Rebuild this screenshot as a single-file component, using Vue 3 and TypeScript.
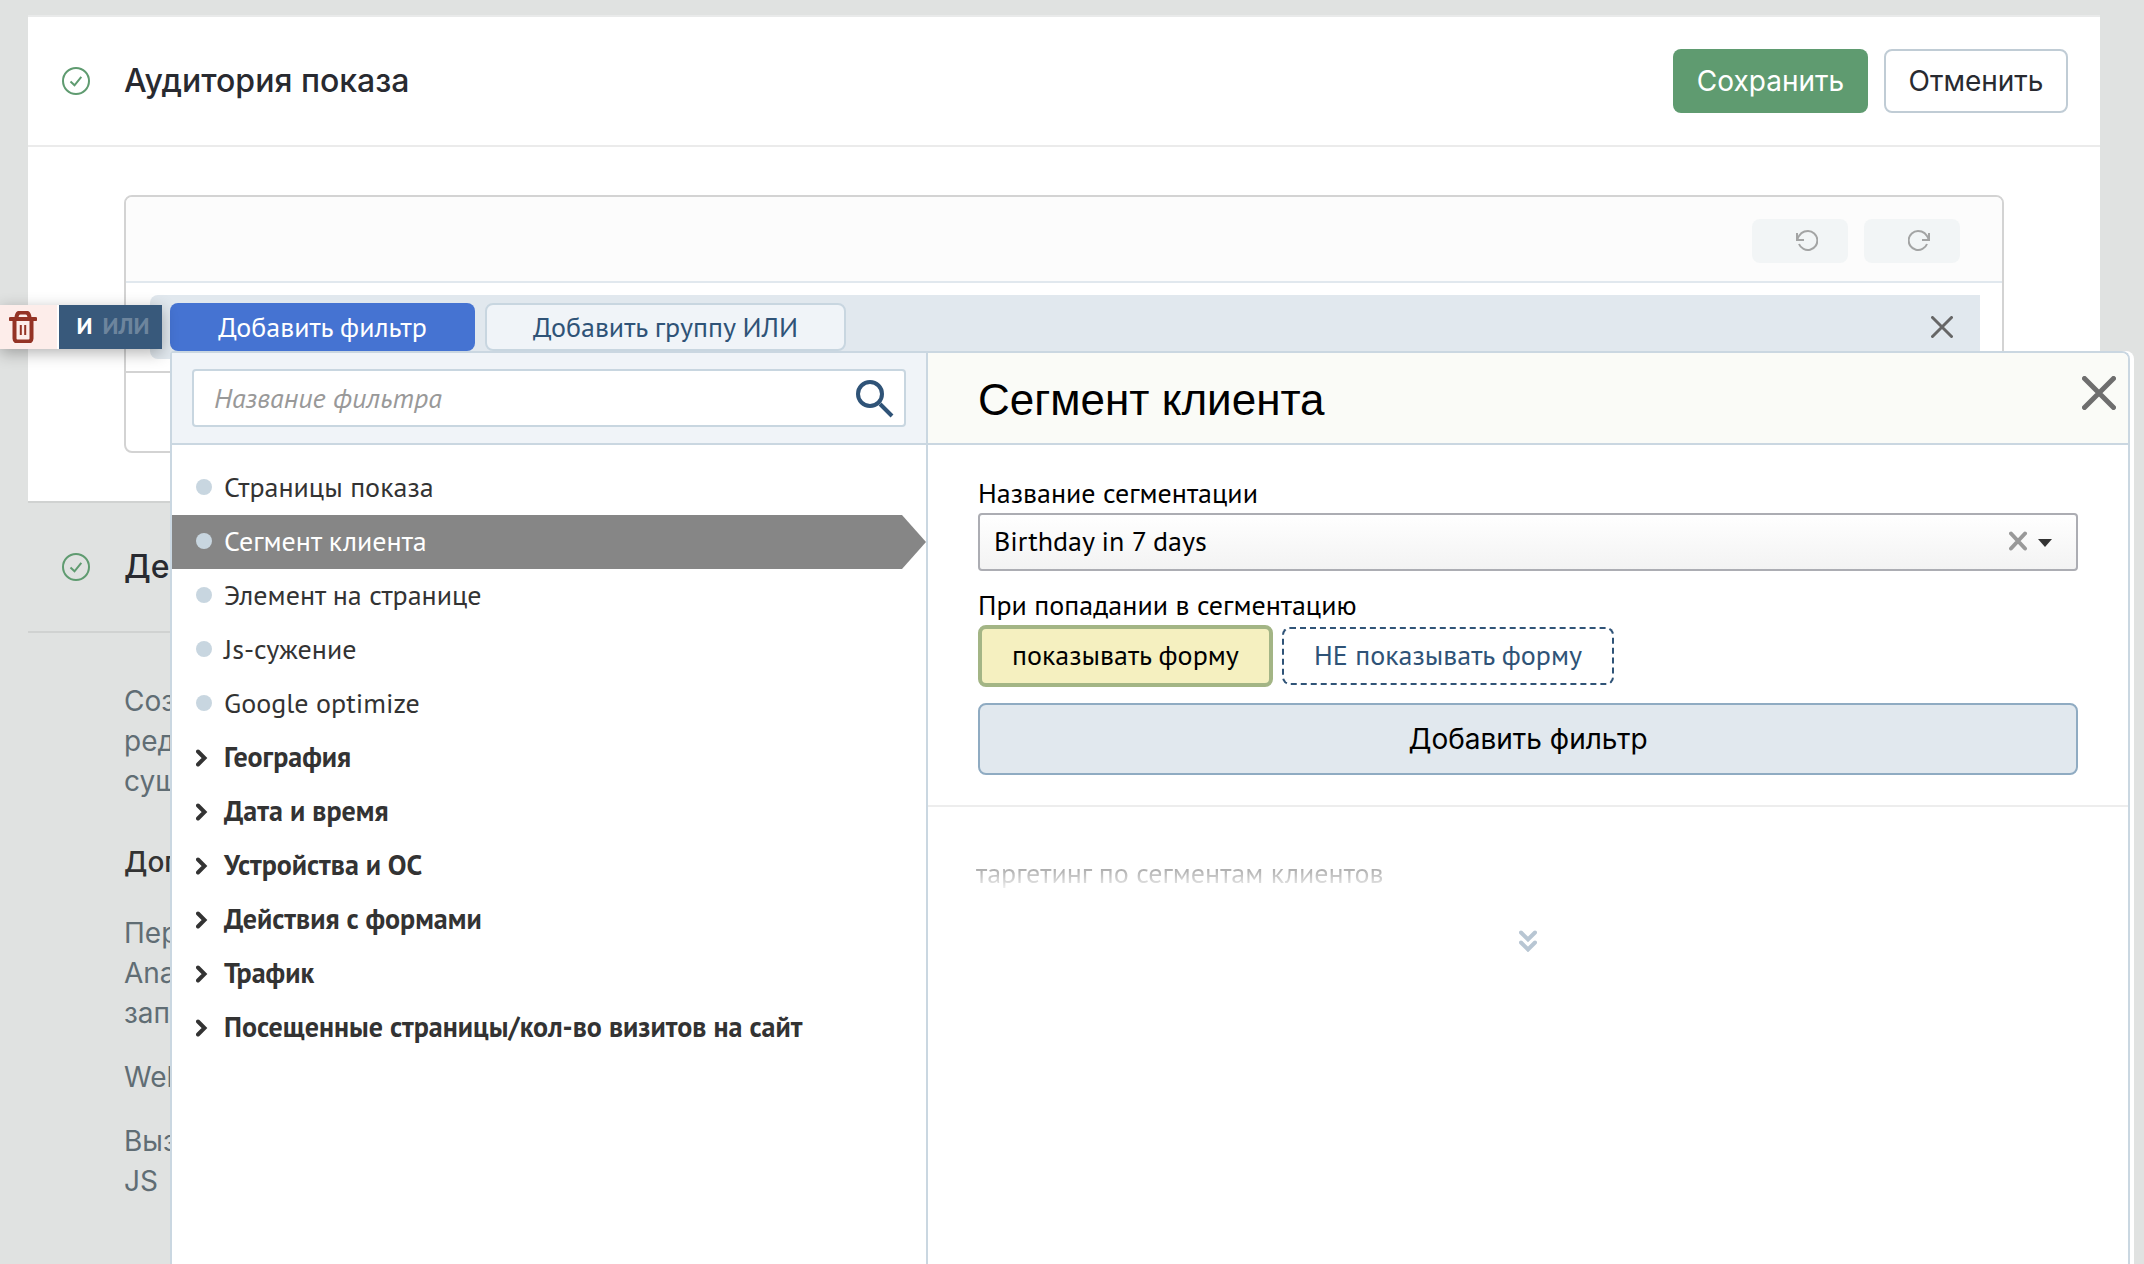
<script setup lang="ts">
import { ref } from 'vue'

interface FilterItem {
  name: string
  group: boolean
}

const filters: FilterItem[] = [
  { name: 'Страницы показа', group: false },
  { name: 'Сегмент клиента', group: false },
  { name: 'Элемент на странице', group: false },
  { name: 'Js-сужение', group: false },
  { name: 'Google optimize', group: false },
  { name: 'География', group: true },
  { name: 'Дата и время', group: true },
  { name: 'Устройства и ОС', group: true },
  { name: 'Действия с формами', group: true },
  { name: 'Трафик', group: true },
  { name: 'Посещенные страницы/кол-во визитов на сайт', group: true },
]

const selected = ref('Сегмент клиента')
const query = ref('')
const segment = ref('Birthday in 7 days')
const show = ref(true)

const intro: string[] = ['Соз', 'ред', 'сущ']
const extras: string[][] = [['Пер', 'Ana', 'зап'], ['Web'], ['Выз', 'JS']]
</script>

<template>
  <main class="page">
    <section class="card">
      <header class="card-head">
        <svg class="check" viewBox="0 0 28 28"><circle cx="14" cy="14" r="13" /><path d="M8.5 14.5 12.5 18.3 19.3 9.8" /></svg>
        <h2>Аудитория показа</h2>
        <button class="btn save" type="button">Сохранить</button>
        <button class="btn cancel" type="button">Отменить</button>
      </header>
      <div class="card-body">
        <div class="editor">
          <div class="toolbar">
            <button class="history" type="button" aria-label="Отменить действие">
              <svg viewBox="0 0 22 22"><path d="M1 3v7h7M1.2 9.8C3 4.500 7 1 12 1a9.500 9.500 0 1 1-9 13" /></svg>
            </button>
            <button class="history" type="button" aria-label="Повторить действие">
              <svg viewBox="0 0 22 22"><path d="M21 3v7h-7M20.800 9.800C19 4.500 15 1 10 1a9.500 9.500 0 1 0 9 13" /></svg>
            </button>
          </div>
          <div class="row">
            <div class="band">
              <div class="logic">
                <button class="trash" type="button" aria-label="Удалить">
                  <svg viewBox="0 0 28 32">
                    <path d="M1.500 8h25M7.500 7.500C7.500 3 9 1.500 11.500 1.500h5c2.500 0 4 1.500 4 6" />
                    <path d="M5.500 8v19.500q0 3 3 3h11q3 0 3-3V8" />
                    <path class="thin" d="M11.800 14v10M16.200 14v10" />
                  </svg>
                </button>
                <button class="switch" type="button"><b>И</b><b class="off">ИЛИ</b></button>
              </div>
              <button class="add primary" type="button">Добавить фильтр</button>
              <button class="add group" type="button">Добавить группу ИЛИ</button>
              <button class="icon band-close" type="button" aria-label="Закрыть группу">
                <svg viewBox="0 0 22 22"><path d="M1.500 1.500l19 19M20.500 1.500l-19 19" /></svg>
              </button>

              <div class="popup">
                <div class="panel">
                  <div class="side">
                    <div class="side-head">
                      <label class="search">
                        <input v-model="query" type="text" placeholder="Название фильтра" aria-label="Название фильтра" />
                        <svg viewBox="0 0 38 38"><circle cx="14" cy="14" r="12" /><path d="M24 24 36 36" /></svg>
                      </label>
                    </div>
                    <ul class="filters">
                      <li v-for="f in filters" :key="f.name">
                        <button
                          type="button"
                          class="filter"
                          :class="{ bold: f.group, active: f.name === selected }"
                          @click="selected = f.name"
                        >
                          <svg v-if="f.group" class="chevron" viewBox="0 0 16 18"><path d="M2 2.500 8.500 9 2 15.500" /></svg>
                          <span v-else class="dot"></span>
                          {{ f.name }}
                        </button>
                      </li>
                    </ul>
                  </div>
                  <div class="detail">
                    <div class="detail-head">
                      <h1>Сегмент клиента</h1>
                      <button class="icon panel-close" type="button" aria-label="Закрыть">
                        <svg viewBox="0 0 34 34"><path d="M2.500 2.500l29 29M31.500 2.500l-29 29" /></svg>
                      </button>
                    </div>
                    <form class="form" @submit.prevent>
                      <label for="segment">Название сегментации</label>
                      <div class="select">
                        <select id="segment" v-model="segment">
                          <option>Birthday in 7 days</option>
                        </select>
                        <svg class="marks" viewBox="0 0 44 22">
                          <path class="clear" d="M2 3.500 16 18.500M16 3.500 2 18.500" />
                          <path class="caret" d="M29 9h14l-7 8z" />
                        </svg>
                      </div>
                      <span class="caption">При попадании в сегментацию</span>
                      <div class="options">
                        <button type="button" class="option" :class="{ on: show }" @click="show = true">показывать форму</button>
                        <button type="button" class="option" :class="{ on: !show }" @click="show = false">НЕ показывать форму</button>
                      </div>
                      <button class="submit" type="submit">Добавить фильтр</button>
                    </form>
                    <div class="hint">
                      <p>таргетинг по сегментам клиентов</p>
                      <button class="icon more" type="button" aria-label="Развернуть">
                        <svg viewBox="0 0 18 22"><path d="M2 2.500l7 7 7-7M2 12.500l7 7 7-7" /></svg>
                      </button>
                    </div>
                  </div>
                </div>
              </div>
            </div>
          </div>
          <div class="foot"></div>
        </div>
      </div>
    </section>

    <section class="next">
      <header class="card-head">
        <svg class="check" viewBox="0 0 28 28"><circle cx="14" cy="14" r="13" /><path d="M8.500 14.500 12.500 18.300 19.300 9.800" /></svg>
        <h2>Дей</h2>
      </header>
      <div class="text">
        <p><span v-for="line in intro" :key="line">{{ line }}</span></p>
        <h3>Доп</h3>
        <p v-for="(lines, i) in extras" :key="i"><span v-for="line in lines" :key="line">{{ line }}</span></p>
      </div>
    </section>
  </main>
</template>

<style>
body {
  margin: 0;
}
</style>

<style scoped>
.page {
  position: relative;
  min-height: 100vh;
  box-sizing: border-box;
  padding: 15px 44px 0 28px;
  overflow: hidden;
  background: #e0e2e1;
  color: #282a30;
  font: 400 28px/40px Inter, sans-serif;
}
.page * {
  box-sizing: border-box;
}
h1,
h2,
h3,
p,
ul {
  margin: 0;
  padding: 0;
}
button,
input,
select {
  margin: 0;
  padding: 0;
  border: 0;
  background: none;
  color: inherit;
  font: inherit;
}
svg {
  display: block;
  flex: none;
  fill: none;
  stroke: currentColor;
  stroke-width: 2;
}
.card {
  border-top: 2px solid #e9eaea;
  border-bottom: 2px solid #d0d2d1;
  background: #fff;
}
.card-head {
  display: flex;
  align-items: center;
  height: 130px;
  padding: 0 32px 0 34px;
  border-bottom: 2px solid #ebebeb;
}
.check {
  width: 28px;
  height: 28px;
  color: #5f9b70;
}
h2 {
  flex: 1;
  margin-left: 34px;
  font-size: 32px;
  font-weight: 500;
}
.btn {
  height: 64px;
  border-radius: 8px;
}
.save {
  width: 195px;
  background: #5f9b70;
  color: #fff;
}
.cancel {
  width: 184px;
  margin-left: 16px;
  border: 2px solid #c0ccd5;
}
.card-body {
  padding: 48px 96px;
}
.editor {
  border: 2px solid #d3d3d3;
  border-radius: 8px;
}
.toolbar {
  display: flex;
  justify-content: flex-end;
  gap: 16px;
  height: 86px;
  padding: 22px 42px;
  border-bottom: 2px solid #e1e8ee;
  border-radius: 6px 6px 0 0;
  background: #fcfcfc;
}
.history {
  width: 96px;
  height: 44px;
  padding-left: 44px;
  border-radius: 8px;
  background: #f2f5f6;
  color: #a3a4a4;
}
.history svg {
  width: 22px;
  height: 22px;
}
.row {
  padding: 12px 22px 12px 24px;
  border-bottom: 2px solid #d3d3d3;
}
.foot {
  height: 78px;
}
.band {
  position: relative;
  display: flex;
  gap: 10px;
  height: 64px;
  padding: 8px 27px 8px 20px;
  border-radius: 8px 0 0 8px;
  background: #e1e8ee;
  font-family: "PT Sans", Lato, sans-serif;
}
.logic {
  position: absolute;
  top: 10px;
  left: -150px;
  display: flex;
  gap: 2px;
  width: 162px;
  height: 44px;
  background: #fff;
  box-shadow: 0 4px 16px rgba(0, 0, 0, 0.3);
}
.trash {
  width: 57px;
  padding-left: 9px;
  background: #fdedea;
  color: #943325;
}
.trash svg {
  width: 28px;
  height: 32px;
  stroke-width: 4;
  stroke-linecap: round;
}
.trash .thin {
  stroke-width: 2;
  stroke-linecap: butt;
}
.switch {
  display: flex;
  flex: 1;
  align-items: center;
  justify-content: center;
  gap: 10px;
  padding: 0 0 2px 5px;
  background: #38597b;
  color: #fff;
  font-size: 24px;
}
.off {
  color: #6d859d;
}
.add {
  height: 48px;
  border-radius: 8px;
}
.primary {
  width: 305px;
  background: #4573d2;
  color: #fff;
}
.group {
  width: 361px;
  border: 2px solid #c8d6e0;
  background: #f0f4f8;
  color: #2f5377;
}
.icon svg {
  stroke-linecap: round;
}
.band-close {
  margin-left: auto;
  color: #666;
}
.band-close svg {
  width: 22px;
  height: 22px;
  stroke-width: 3;
}
.popup {
  position: absolute;
  top: 56px;
  right: -154px;
  left: 20px;
  padding-right: 4px;
  border-radius: 8px 8px 0 0;
  background: #fff;
}
.panel {
  display: flex;
  min-height: calc(100vh - 351px);
  border: 2px solid #cad7e1;
  border-bottom: 0;
  border-radius: 4px 8px 0 0;
  color: #333;
}
.side {
  width: 756px;
  border-right: 2px solid #cad7e1;
}
.side-head {
  height: 92px;
  padding: 16px 20px;
  border-bottom: 2px solid #cad7e1;
  background: #f0f4f8;
}
.search {
  display: flex;
  align-items: center;
  height: 58px;
  padding: 0 10px 0 20px;
  border: 2px solid #c8d6e0;
  border-radius: 4px;
  background: #fff;
  color: #2f5377;
}
.search input {
  flex: 1;
  height: 54px;
  padding-bottom: 2px;
  outline: 0;
}
.search input::placeholder {
  color: #999;
  font-style: italic;
  opacity: 1;
}
.search svg {
  width: 38px;
  height: 38px;
  margin-top: 2px;
  stroke-width: 4;
}
.filters {
  padding-top: 16px;
  list-style: none;
}
.filter {
  display: flex;
  align-items: center;
  gap: 12px;
  width: 100%;
  height: 54px;
  padding: 0 0 2px 24px;
  text-align: left;
}
.bold {
  font-weight: 700;
}
.active {
  background: #868686;
  color: #fff;
  clip-path: polygon(0 0, calc(100% - 24px) 0, 100% 50%, calc(100% - 24px) 100%, 0 100%);
}
.dot {
  width: 16px;
  height: 16px;
  border-radius: 50%;
  background: #c8d6e0;
}
.chevron {
  width: 16px;
  height: 18px;
  margin-top: 2px;
  stroke-width: 4;
  stroke-linecap: round;
}
.detail {
  flex: 1;
  color: #000;
}
.detail-head {
  display: flex;
  align-items: center;
  justify-content: space-between;
  height: 92px;
  padding: 0 12px 0 50px;
  border-bottom: 2px solid #cad7e1;
  border-radius: 0 6px 0 0;
  background: #fafbf7;
}
h1 {
  padding-top: 4px;
  font: 400 44px/48px "Liberation Sans", Arial, sans-serif;
}
.panel-close {
  margin-bottom: 10px;
  color: #6e6e6e;
}
.panel-close svg {
  width: 34px;
  height: 34px;
  stroke-width: 5;
}
.form {
  display: flex;
  flex-direction: column;
  padding: 28px 50px 30px;
  border-bottom: 2px solid #ededed;
}
.select {
  position: relative;
  margin-bottom: 14px;
}
select {
  display: block;
  appearance: none;
  width: 100%;
  height: 58px;
  padding: 0 80px 2px 14px;
  border: 2px solid #acadb3;
  border-radius: 4px;
  background: linear-gradient(#fff, #f3f3f3);
}
.marks {
  position: absolute;
  top: 17px;
  right: 25px;
  width: 44px;
  height: 22px;
  pointer-events: none;
}
.clear {
  stroke: #999;
  stroke-width: 4;
  stroke-linecap: round;
}
.caret {
  fill: #333;
  stroke: none;
}
.options {
  display: flex;
  align-items: center;
  gap: 9px;
  margin-bottom: 16px;
}
.option {
  height: 58px;
  padding: 0 30px 2px;
  border: 2px dashed #2f5377;
  border-radius: 8px;
  color: #2f5377;
}
.on {
  height: 62px;
  border: 4px solid #a3b585;
  background: #f5f0c0;
  color: #000;
}
.submit {
  height: 72px;
  border: 2px solid #8fabc2;
  border-radius: 8px;
  background: #e1e8ee;
  font-family: Inter, sans-serif;
}
.hint {
  display: flex;
  flex-direction: column;
  align-items: center;
  padding: 46px 48px;
}
.hint p {
  align-self: stretch;
  background: linear-gradient(#999 25%, #fff);
  background-clip: text;
  color: transparent;
}
.more {
  margin-top: 37px;
  color: #b8c6d3;
}
.more svg {
  width: 18px;
  height: 22px;
  stroke-width: 4;
}
.next .card-head {
  border-color: #d0d2d1;
}
.text {
  padding: 48px 96px;
  color: #606d74;
}
.text span {
  display: block;
}
h3 {
  margin: 41px 0 31px;
  color: #333;
  font-size: 28px;
  font-weight: 500;
}
.text p + p {
  margin-top: 24px;
}
</style>
